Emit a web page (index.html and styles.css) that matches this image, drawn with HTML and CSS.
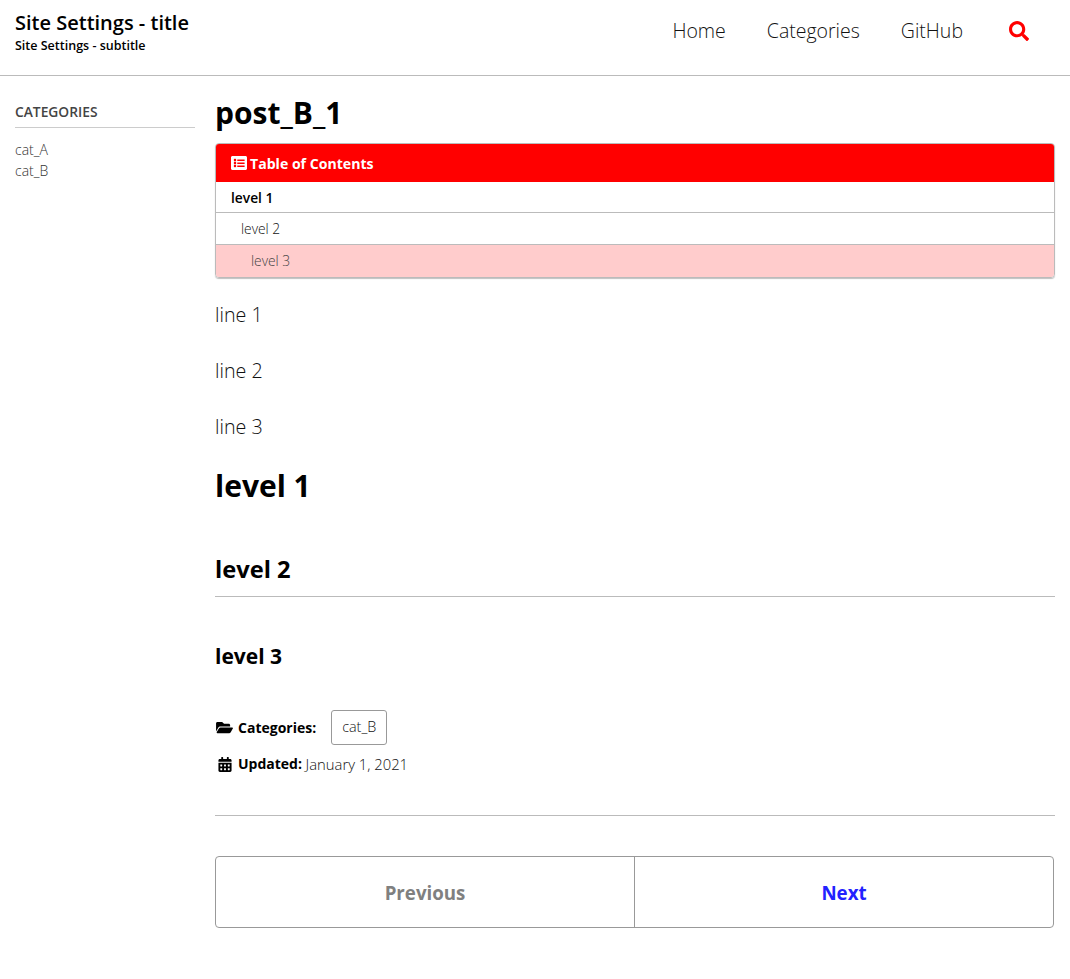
FILE: index.html
```html
<!DOCTYPE html>
<html>
<head>
	<title>post_B_1</title>
	<link rel="stylesheet" href="styles.css">
</head>
<body>
<header class="topbar">
	<div class="brand">
		<div class="brand-title">Site Settings - title</div>
		<div class="brand-sub">Site Settings - subtitle</div>
	</div>
	<nav class="topnav">
		<a>Home</a>
		<a>Categories</a>
		<a>GitHub</a>
		<svg class="search" viewBox="0 0 512 512"><path d="M505 442.700L405.300 343c-4.500-4.500-10.600-7-17-7H372c27.600-35.300 44-79.700 44-128C416 93.100 322.900 0 208 0S0 93.100 0 208s93.100 208 208 208c48.300 0 92.700-16.400 128-44v16.300c0 6.400 2.500 12.500 7 17l99.700 99.700c9.400 9.400 24.600 9.400 33.900 0l28.300-28.300c9.400-9.400 9.400-24.600.1-34zM208 336c-70.700 0-128-57.200-128-128 0-70.700 57.200-128 128-128 70.700 0 128 57.200 128 128 0 70.700-57.200 128-128 128z"/></svg>
	</nav>
</header>
<div class="layout">
	<aside class="side">
		<div class="side-head">CATEGORIES</div>
		<ul class="side-list">
			<li>cat_A</li>
			<li>cat_B</li>
		</ul>
	</aside>
	<main class="post">
		<h1 class="post-title">post_B_1</h1>
		<div class="toc">
			<div class="toc-head">
				<svg class="ico-toc" viewBox="0 0 512 512"><path d="M464 32H48C21.490 32 0 53.490 0 80v352c0 26.510 21.490 48 48 48h416c26.510 0 48-21.490 48-48V80c0-26.510-21.490-48-48-48zM128 120c22.091 0 40 17.909 40 40s-17.909 40-40 40-40-17.909-40-40 17.909-40 40-40zm0 96c22.091 0 40 17.909 40 40s-17.909 40-40 40-40-17.909-40-40 17.909-40 40-40zm0 96c22.091 0 40 17.909 40 40s-17.909 40-40 40-40-17.909-40-40 17.909-40 40-40zm296 72H212c-6.600 0-12-5.400-12-12v-24c0-6.600 5.400-12 12-12h212c6.600 0 12 5.400 12 12v24c0 6.600-5.400 12-12 12zm0-96H212c-6.600 0-12-5.400-12-12v-24c0-6.600 5.400-12 12-12h212c6.600 0 12 5.400 12 12v24c0 6.600-5.400 12-12 12zm0-96H212c-6.600 0-12-5.400-12-12v-24c0-6.600 5.400-12 12-12h212c6.600 0 12 5.400 12 12v24c0 6.600-5.400 12-12 12z"/></svg>
				Table of Contents
			</div>
			<div class="toc-row toc-l1">level 1</div>
			<div class="toc-row toc-l2">level 2</div>
			<div class="toc-row toc-l3">level 3</div>
		</div>
		<p class="line">line 1</p>
		<p class="line">line 2</p>
		<p class="line">line 3</p>
		<h1 class="h-1">level 1</h1>
		<h2 class="h-2">level 2</h2>
		<h3 class="h-3">level 3</h3>
		<div class="meta meta-cat">
			<svg class="ico-folder" viewBox="0 0 576 512"><path d="M572.694 292.093L500.270 416.248A63.997 63.997 0 0 1 444.989 448H45.025c-18.523 0-30.064-20.093-20.731-36.093l72.424-124.155A64 64 0 0 1 152 256h399.964c18.523 0 30.064 20.093 20.730 36.093zM152 224h328v-48c0-26.510-21.490-48-48-48H272l-64-64H48C21.490 64 0 85.490 0 112v278.046l69.077-118.418C86.214 242.200 117.989 224 152 224z"/></svg>
			<b>Categories:</b>
			<span class="tag">cat_B</span>
		</div>
		<div class="meta">
			<svg class="ico-cal" viewBox="0 0 448 512"><path d="M0 464c0 26.500 21.500 48 48 48h352c26.500 0 48-21.500 48-48V192H0v272zm320-196c0-6.600 5.400-12 12-12h40c6.600 0 12 5.400 12 12v40c0 6.600-5.400 12-12 12h-40c-6.600 0-12-5.400-12-12v-40zm0 128c0-6.600 5.400-12 12-12h40c6.600 0 12 5.400 12 12v40c0 6.600-5.400 12-12 12h-40c-6.600 0-12-5.400-12-12v-40zM192 268c0-6.600 5.400-12 12-12h40c6.600 0 12 5.400 12 12v40c0 6.600-5.400 12-12 12h-40c-6.600 0-12-5.400-12-12v-40zm0 128c0-6.600 5.400-12 12-12h40c6.600 0 12 5.400 12 12v40c0 6.600-5.400 12-12 12h-40c-6.600 0-12-5.400-12-12v-40zM64 268c0-6.600 5.400-12 12-12h40c6.600 0 12 5.400 12 12v40c0 6.600-5.400 12-12 12H76c-6.600 0-12-5.400-12-12v-40zm0 128c0-6.600 5.400-12 12-12h40c6.600 0 12 5.400 12 12v40c0 6.600-5.400 12-12 12H76c-6.600 0-12-5.400-12-12v-40zM400 64h-48V16c0-8.800-7.200-16-16-16h-32c-8.800 0-16 7.200-16 16v48H160V16c0-8.800-7.200-16-16-16h-32c-8.800 0-16 7.200-16 16v48H48C21.500 64 0 85.500 0 112v48h448v-48c0-26.500-21.500-48-48-48z"/></svg>
			<b>Updated:</b>&nbsp;<span class="date">January 1, 2021</span>
		</div>
		<hr class="rule">
		<div class="pager">
			<a class="prev">Previous</a>
			<a class="next">Next</a>
		</div>
	</main>
</div>
</body>
</html>
```

FILE: styles.css
```css
html,body{margin:0;padding:0;}
body{font-family:"Open Sans",sans-serif;color:#000;background:#fff;font-weight:300;}

.topbar{display:flex;justify-content:space-between;align-items:flex-start;height:75px;border-bottom:1px solid #bbb;padding:0 41px 0 15px;}
.brand{padding-top:9px;}
.brand-title{font-size:20px;font-weight:600;line-height:27px;}
.brand-sub{font-size:12.500px;font-weight:600;line-height:20px;}
.topnav{display:flex;align-items:center;gap:41px;font-size:19.500px;line-height:28px;color:#111;padding-top:17px;}
.search{width:20px;height:20px;fill:#f00;margin-left:5px;}

.layout{display:flex;padding:0 15px;gap:20px;}
.side{width:180px;flex:none;padding-top:27px;}
.side-head{font-size:13.800px;font-weight:600;color:#444;line-height:18px;padding-bottom:6px;border-bottom:1px solid #ccc;}
.side-list{list-style:none;margin:11px 0 0;padding:0;font-size:14px;color:#333;line-height:21px;}

.post{flex:1;min-width:0;}
.post-title{font-size:30px;font-weight:700;line-height:38px;margin:18px 0 11px;}

.toc{border:1px solid #bbb;border-radius:4px;overflow:hidden;box-shadow:0 1px 1px rgba(0,0,0,.25);margin-bottom:23px;}
.toc-head{background:#f00;color:#fff;font-size:14.100px;font-weight:700;height:38px;padding-top:1px;display:flex;align-items:center;gap:3px;padding-left:16px;margin:-1px -1px 0;}
.ico-toc{width:16px;height:16px;fill:#fff;flex:none;}
.toc-row{font-size:13.800px;line-height:31px;border-bottom:1px solid #bbb;color:#111;}
.toc-l1{padding:1px 0 0 15px;line-height:29px;font-weight:600;color:#000;}
.toc-l2{padding-left:25px;}
.toc-l3{padding-left:35px;background:#fcc;border-bottom:0;color:#444;line-height:32px;}

.line{font-size:19.700px;line-height:28px;margin:22px 0 28px;color:#111;}
.h-1{font-size:30px;font-weight:700;line-height:44px;margin:-5px 0 45px;}
.h-2{font-size:23.700px;font-weight:700;line-height:33px;margin:0;padding-bottom:10px;border-bottom:1px solid #bbb;}
.h-3{font-size:21px;font-weight:700;line-height:28px;margin:45px 0 40px;}

.meta{display:flex;align-items:center;font-size:14px;line-height:20px;}
.ico-folder{width:17px;height:15px;fill:#000;flex:none;margin:0 5px 0 1px;}
.ico-cal{width:14px;height:15px;fill:#000;flex:none;margin:0 6px 0 3px;}
.meta b{font-weight:700;}
.date{font-size:14.800px;color:#111;}
.meta-cat{margin-bottom:9px;}
.tag{border:1px solid #999;border-radius:3px;padding:6px 10px 7px;margin-left:15px;font-size:14.400px;color:#111;}
.rule{border:0;border-top:1px solid #bbb;margin:41px 0 40px;}

.pager{display:flex;height:70px;border:1px solid #999;border-radius:4px;margin:0 1px 50px 0;}
.pager a{flex:1;display:flex;align-items:center;justify-content:center;font-size:18.700px;font-weight:700;}
.prev{color:#808080;border-right:1px solid #999;}
.next{color:#2222ff;}
```
